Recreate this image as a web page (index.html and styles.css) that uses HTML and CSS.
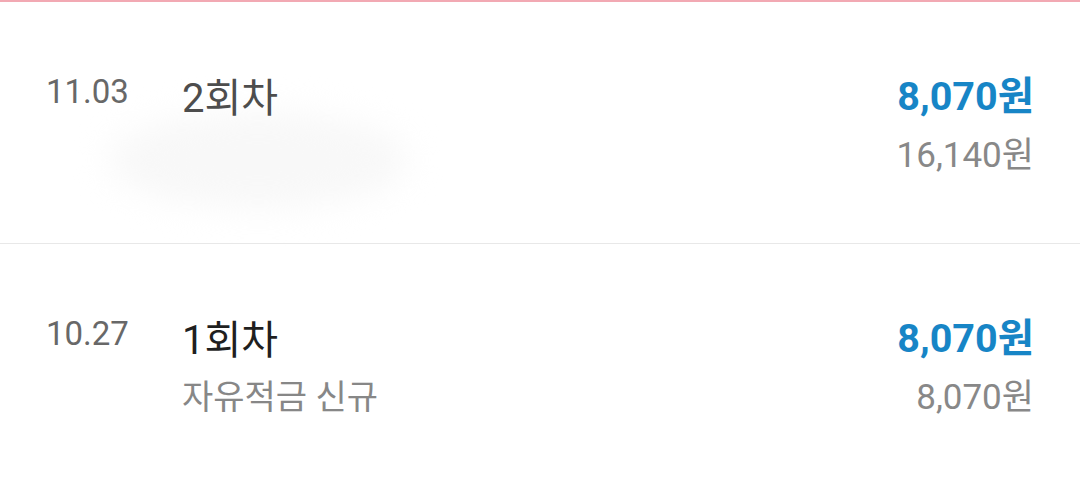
FILE: index.html
```html
<!DOCTYPE html>
<html lang="ko">
<head>
    <meta charset="UTF-8">
    <meta name="viewport" content="width=device-width, initial-scale=1.0">
    <title>납입 내역</title>
    <link rel="stylesheet" href="styles.css">
</head>
<body>

    <div class="history">
        <div class="history-item">
            <div class="item-date">11.03</div>
            <div class="item-info">
                <div class="item-title muted">2회차</div>
            </div>
            <div class="item-amount">
                <div class="amount-paid">8,070원</div>
                <div class="amount-total">16,140원</div>
            </div>
            <!-- memo was blurred out in the capture -->
            <div class="memo-blur"></div>
        </div>

        <div class="history-item">
            <div class="item-date">10.27</div>
            <div class="item-info">
                <div class="item-title">1회차</div>
                <div class="item-memo">자유적금 신규</div>
            </div>
            <div class="item-amount">
                <div class="amount-paid">8,070원</div>
                <div class="amount-total">8,070원</div>
            </div>
        </div>
    </div>

</body>
</html>
```

FILE: styles.css
```css
body {
    margin: 0;
    font-family: Roboto, "Noto Sans CJK KR", sans-serif;
    background-color: #fff;
}
.history {
    border-top: 2px solid #f2a9b3;
}
.history-item {
    position: relative;
    display: flex;
    align-items: flex-start;
    height: 242px;
    padding: 0 46px 0 46px;
    border-bottom: 1px solid #e8e8e8;
    box-sizing: border-box;
}
.item-date {
    width: 136px;
    padding-top: 70px;
    font-size: 33px;
    line-height: 40px;
    color: #686868;
}
.item-info {
    flex: 1;
    padding-top: 73px;
}
.item-title {
    font-size: 40px;
    line-height: 48px;
    color: #1f1f1f;
}
.item-title.muted {
    color: #4d4d4d;
}
.item-memo {
    margin-top: 10px;
    font-size: 34px;
    line-height: 44px;
    color: #878787;
}
.item-amount {
    padding-top: 71px;
    text-align: right;
}
.amount-paid {
    font-size: 39.5px;
    line-height: 48px;
    font-weight: bold;
    color: #1785c6;
}
.amount-total {
    margin-top: 11px;
    font-size: 35px;
    line-height: 48px;
    color: #888;
}
.memo-blur {
    position: absolute;
    z-index: -1;
    left: 108px;
    top: 110px;
    width: 300px;
    height: 96px;
    border-radius: 50%;
    background-color: #f8f8f8;
    filter: blur(16px);
}
```
